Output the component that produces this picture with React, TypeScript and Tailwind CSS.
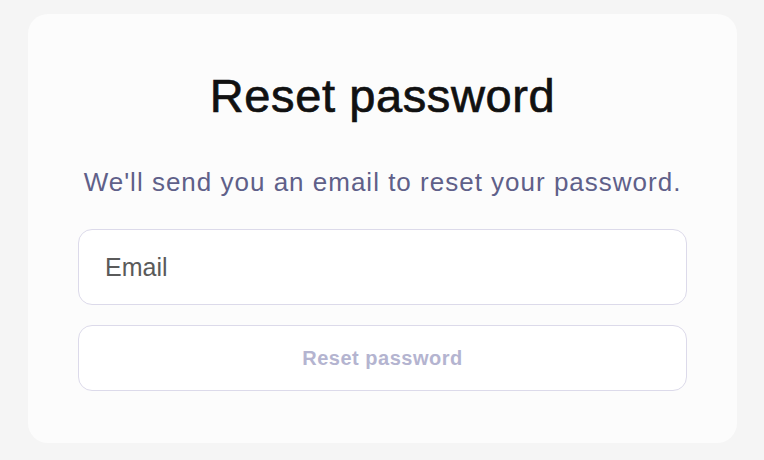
import React from "react";

const App = () => {
  return (
    <div className="min-h-screen w-full bg-[#f5f5f5] pt-[14px] pl-[28px] pr-[27px] font-['Liberation_Sans',Arial,sans-serif]">
      <div className="w-[709px] h-[429px] rounded-[20px] bg-[#fcfcfc] pt-[58px] px-[50px] pb-[52px] flex flex-col">
        {/* Heading */}
        <h1 className="text-center text-[47px] leading-none tracking-[0.6px] text-[#111111] [-webkit-text-stroke:0.7px_#111111]">
          Reset password
        </h1>
        <p className="mt-[50px] text-center text-[26px] leading-none tracking-[1px] text-[#5f6089]">
          We'll send you an email to reset your password.
        </p>

        {/* Form */}
        <form className="mt-[34px] flex flex-col gap-[20px]" onSubmit={(e) => e.preventDefault()}>
          <input
            type="email"
            placeholder="Email"
            className="h-[76px] w-full rounded-[14px] border border-[#dcdaea] bg-white px-[26px] text-[25px] text-[#333] placeholder:text-[#5a5a5a] outline-none"
          />
          <button
            type="submit"
            disabled
            className="h-[66px] w-full rounded-[14px] border border-[#dcdaea] bg-white text-[20px] font-bold tracking-[0.5px] text-[#b4b4d0]"
          >
            Reset password
          </button>
        </form>
      </div>
    </div>
  );
};

export default App;
